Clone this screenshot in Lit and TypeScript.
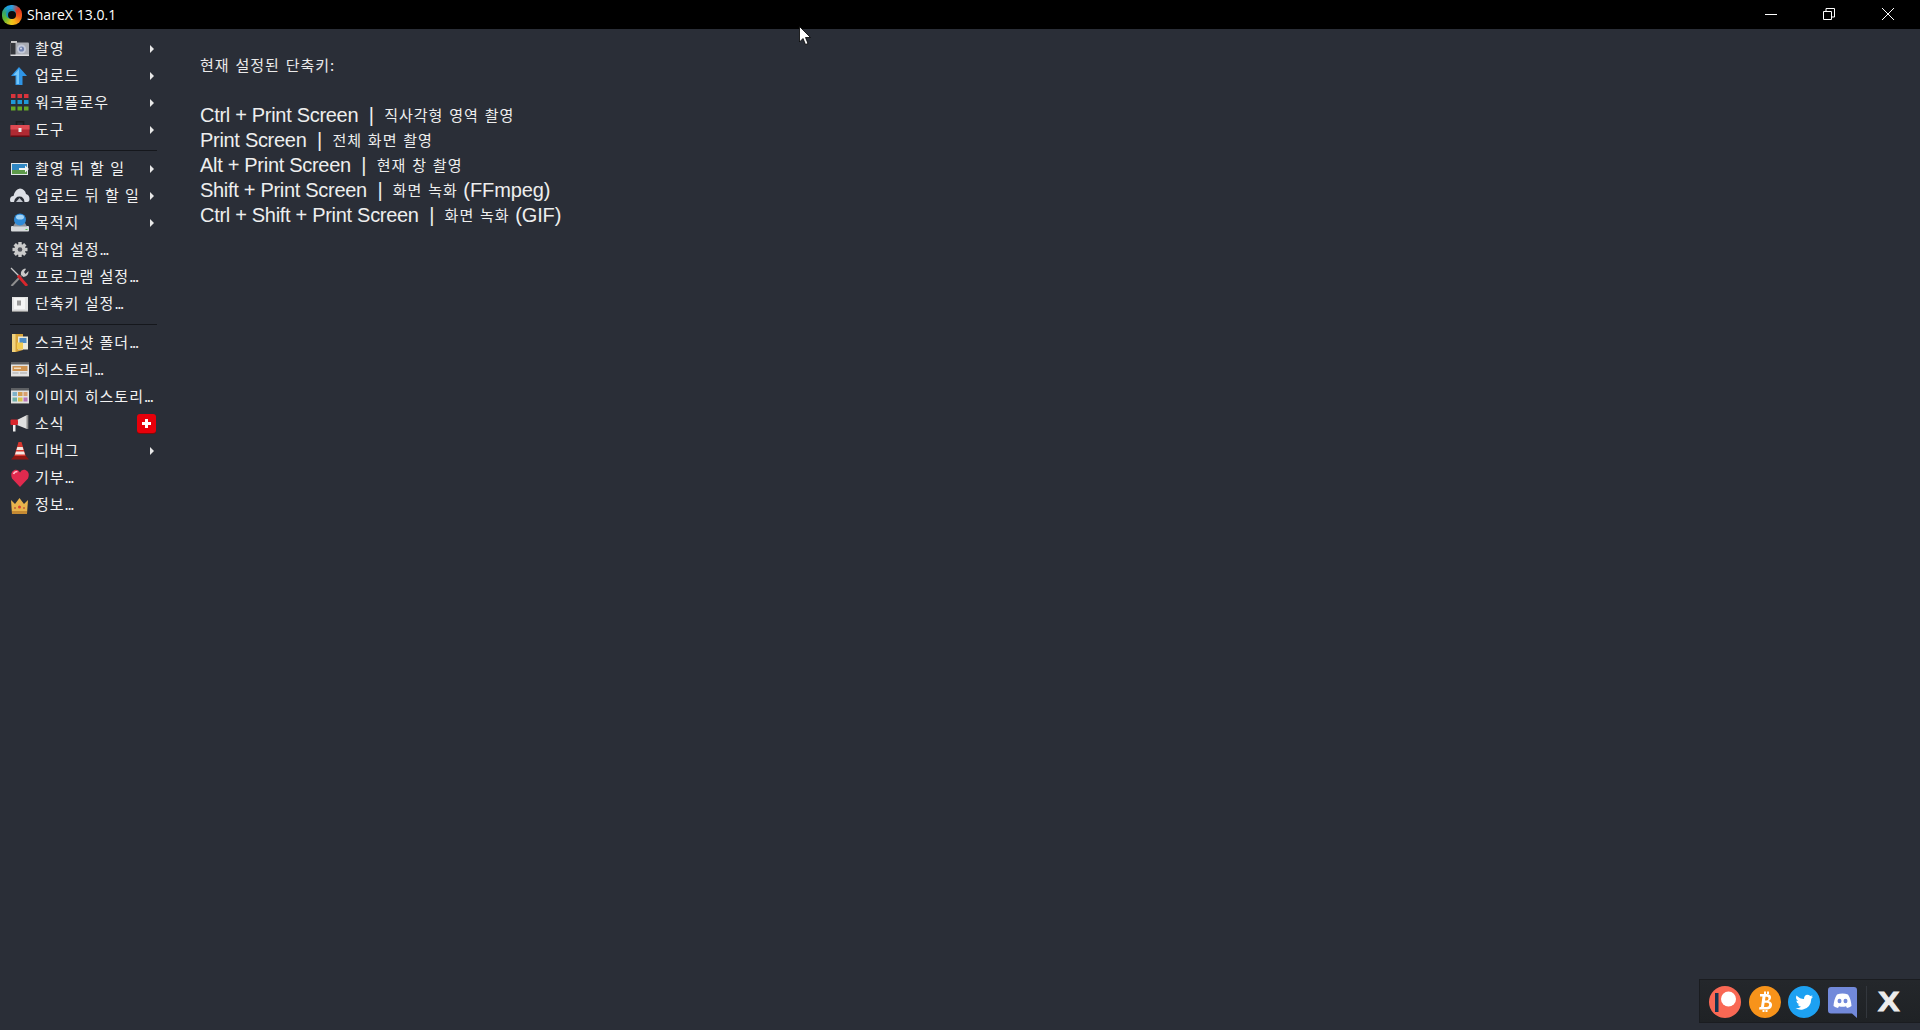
import { LitElement, html, css, svg } from "lit";
import { customElement } from "lit/decorators.js";

const icons: Record<string, unknown> = {
  camera: svg`<rect x="0.500" y="3.500" width="18.500" height="13" rx="1" fill="#a9acb3"/><rect x="0.500" y="3.500" width="5" height="13" fill="#34363b"/><rect x="1" y="2" width="6" height="2" fill="#c5c5c7"/><circle cx="11.500" cy="10" r="4.500" fill="#c3c9d9"/><circle cx="11.500" cy="10" r="2.600" fill="#6f80ad"/><circle cx="11" cy="9.500" r="0.900" fill="#dfe5f2"/><rect x="0.500" y="15.500" width="18.500" height="1.500" fill="#dcdcdf"/>`,
  up: svg`<path d="M9 1 L17 10 H12.500 V19 H5.500 V10 H1 Z" fill="#2f95e6"/><path d="M9 3 L9 18 H6.500 V9 H3.500 Z" fill="#73c6f9"/>`,
  grid: svg`<g fill="#d8343c"><rect x="1" y="1" width="4.500" height="4"/><rect x="7.500" y="1" width="4.500" height="4"/><rect x="14" y="1" width="4.500" height="4"/></g><g fill="#1f9ad8"><rect x="1" y="7" width="4.500" height="4"/><rect x="7.500" y="7" width="4.500" height="4"/><rect x="14" y="7" width="4.500" height="4"/></g><g fill="#66a828"><rect x="1" y="13.500" width="4.500" height="4"/><rect x="7.500" y="13.500" width="4.500" height="4"/><rect x="14" y="13.500" width="4.500" height="4"/></g>`,
  toolbox: svg`<path d="M6.500 5 V1.800 H13.500 V5" fill="none" stroke="#1d1d1f" stroke-width="1.600"/><rect x="0.500" y="5" width="19" height="12" rx="1" fill="#b02a33"/><rect x="0.500" y="5" width="19" height="4.500" fill="#de4a52"/><rect x="0.500" y="15.500" width="19" height="1.500" fill="#5f0d14"/><rect x="8.500" y="8" width="3" height="4" fill="#e8e8e8"/>`,
  afterCapture: svg`<rect x="1" y="4" width="17" height="12" fill="#e1e7ea"/><rect x="2" y="5" width="15" height="10" fill="#2f87c4"/><rect x="2" y="11" width="15" height="4" fill="#5d9a4a"/><path d="M9 9 H15 V6.500 L19 10 L15 13.500 V11 H9 Z" fill="#f2f5f6"/>`,
  cloud: svg`<path d="M4 16 H1 Q0 16 0 14 Q0 10 3.500 10 Q5 3 10 2.500 Q15 3 16 8 Q19.500 9 19.500 13 Q19.500 16 17 16 H14.500 Q14 10.500 9.500 10.500 Q5 10.500 4 16 Z" fill="#dde0e6"/><path d="M6 16 L9.500 12 L13 16 Z" fill="#c2c6ce"/>`,
  dest: svg`<rect x="1" y="13" width="18" height="5.500" rx="1" fill="#d8dadc"/><path d="M3 13.500 L5 10 H15 L17 13.500 Z" fill="#8d939b"/><circle cx="10" cy="6.500" r="6" fill="#2f8ad6"/><ellipse cx="10" cy="4.200" rx="4" ry="2.400" fill="#a0d3f7"/><rect x="15.500" y="16" width="2" height="1" fill="#4ec24e"/>`,
  gear: svg`<g fill="#cbcbcb"><circle cx="10" cy="9.500" r="5.500"/><rect x="8.300" y="2" width="3.400" height="15"/><rect x="2.500" y="7.800" width="15" height="3.400"/><rect x="8.300" y="2" width="3.400" height="15" transform="rotate(45 10 9.500)"/><rect x="8.300" y="2" width="3.400" height="15" transform="rotate(-45 10 9.500)"/></g><circle cx="10" cy="9.500" r="2.300" fill="#50525a"/>`,
  tools: svg`<path d="M1.500 19 L11 9" stroke="#8f8f8f" stroke-width="2"/><path d="M1 1 L9 9" stroke="#c9c9c9" stroke-width="1.200"/><path d="M8 8.500 L17 19" stroke="#d8262c" stroke-width="2.800"/><path d="M11 8 Q10 3 15 1.500 L16 2 L14 5 L15.500 7 L18.500 4 Q19 9 13.500 10 Z" fill="#c9c9c9"/>`,
  hotkey: svg`<rect x="2" y="3" width="16" height="15" fill="#e4e4e4"/><rect x="2" y="16.800" width="16" height="1.200" fill="#8b8b8b"/><rect x="4" y="4" width="11" height="11" fill="#f5f5f5"/><rect x="7" y="6.500" width="4" height="5" fill="#9a9a9a"/>`,
  folder: svg`<path d="M2 1 H13 V17 L6 19 H2 Z" fill="#d9a53a"/><rect x="2" y="1" width="3.500" height="18" fill="#f0d27e"/><rect x="8" y="3.500" width="10" height="13" fill="#ece9da"/><rect x="9.500" y="5" width="7" height="5" fill="#4d8cc6"/><rect x="7" y="9.500" width="6" height="6.500" fill="#f2cb52"/>`,
  history: svg`<rect x="1" y="2" width="18" height="15" rx="1" fill="#e2e2e2"/><rect x="1" y="2" width="18" height="2.500" fill="#5e6063"/><rect x="2.500" y="6" width="15" height="5" fill="#cf9350"/><rect x="4" y="7.500" width="7" height="1.500" fill="#f1dcc0"/><rect x="2.500" y="12.500" width="6" height="1" fill="#a9a9a9"/><rect x="10" y="12.500" width="7" height="1" fill="#a9a9a9"/><rect x="1" y="16" width="18" height="1" fill="#7f7f7f"/>`,
  imgHistory: svg`<rect x="1" y="1" width="18" height="16" rx="1" fill="#e2e2e2"/><rect x="1" y="1" width="18" height="2.500" fill="#5e6063"/><rect x="2.500" y="5" width="4.500" height="4" fill="#7fb1c9"/><rect x="8" y="5" width="4.500" height="4" fill="#d39c50"/><rect x="13.500" y="5" width="4" height="4" fill="#d9a070"/><rect x="2.500" y="10.500" width="4.500" height="4" fill="#6fb0a8"/><rect x="8" y="10.500" width="4.500" height="4" fill="#d8c24c"/><rect x="13.500" y="10.500" width="4" height="4" fill="#b875b8"/><rect x="1" y="16" width="18" height="1" fill="#7f7f7f"/>`,
  news: svg`<path d="M7 6 L17 1 V15 L7 11 Z" fill="#e0e0e0"/><rect x="0.500" y="5.500" width="7.500" height="5.500" rx="1" fill="#d8262c"/><path d="M3 11 H5.500 V17.500 H3 Z" fill="#eeeeee"/><rect x="16.500" y="1" width="1.800" height="14" fill="#8e8e8e"/>`,
  cone: svg`<path d="M8.500 1 H11.500 L16 16 H4 Z" fill="#d7372d"/><path d="M7.300 6 H12.700 L13.500 9 H6.500 Z M6 10.500 H14 L15 13.500 H5 Z" fill="#f3e8e2"/><path d="M1 18.500 L4 15 H16 L19 18.500 Z" fill="#8c1712"/>`,
  heart: svg`<path d="M10 19 L2 10.500 Q-0.500 4 5 1.800 Q8.500 1 10 4.500 Q11.500 1 15 1.800 Q20.500 4 18 10.500 Z" fill="#e02a4e"/><path d="M3.500 6 Q4.500 3.500 7.500 3.500" stroke="#ffb9c7" stroke-width="1.600" fill="none"/>`,
  crown: svg`<path d="M1 5 L5 9 L9.500 3 L14 9 L18 5 L17 19 H2 Z" fill="#e9b44c"/><rect x="2" y="16" width="15" height="3" fill="#c58a33"/><circle cx="9.500" cy="12" r="1.500" fill="#d9402f"/><circle cx="5" cy="13" r="1" fill="#c0603a"/><circle cx="14" cy="13" r="1" fill="#c0603a"/>`,
};

type Item = { icon: string; label: string; more?: boolean; sub?: boolean; badge?: boolean };

const groups: Item[][] = [
  [
    { icon: "camera", label: "촬영", sub: true },
    { icon: "up", label: "업로드", sub: true },
    { icon: "grid", label: "워크플로우", sub: true },
    { icon: "toolbox", label: "도구", sub: true },
  ],
  [
    { icon: "afterCapture", label: "촬영 뒤 할 일", sub: true },
    { icon: "cloud", label: "업로드 뒤 할 일", sub: true },
    { icon: "dest", label: "목적지", sub: true },
    { icon: "gear", label: "작업 설정", more: true },
    { icon: "tools", label: "프로그램 설정", more: true },
    { icon: "hotkey", label: "단축키 설정", more: true },
  ],
  [
    { icon: "folder", label: "스크린샷 폴더", more: true },
    { icon: "history", label: "히스토리", more: true },
    { icon: "imgHistory", label: "이미지 히스토리", more: true },
    { icon: "news", label: "소식", badge: true },
    { icon: "cone", label: "디버그", sub: true },
    { icon: "heart", label: "기부", more: true },
    { icon: "crown", label: "정보", more: true },
  ],
];

const hotkeys = [
  ["Ctrl + Print Screen", "직사각형 영역 촬영", ""],
  ["Print Screen", "전체 화면 촬영", ""],
  ["Alt + Print Screen", "현재 창 촬영", ""],
  ["Shift + Print Screen", "화면 녹화", " (FFmpeg)"],
  ["Ctrl + Shift + Print Screen", "화면 녹화", " (GIF)"],
];

@customElement("app-root")
export class AppRoot extends LitElement {
  static styles = css`
    :host {
      display: flex;
      flex-direction: column;
      position: relative;
      width: 1920px;
      height: 1030px;
      overflow: hidden;
      background: #2a2e37;
      color: #f0f0f0;
      font-family: "Liberation Sans", "Noto Sans CJK KR", sans-serif;
    }
    .titlebar {
      flex: 0 0 29px;
      height: 29px;
      background: #000;
      display: flex;
      align-items: center;
      color: #fff;
    }
    .logo {
      width: 20px;
      height: 20px;
      margin-left: 2px;
      flex: none;
      border-radius: 9px;
      background: conic-gradient(#2b9fe0 0deg, #e0341f 50deg, #ee5a1c 100deg, #f8b415 160deg, #e6c81d 190deg, #62b72e 240deg, #35a66a 290deg, #1c9ce0 330deg, #2b9fe0 360deg);
      display: flex;
      align-items: center;
      justify-content: center;
    }
    .logo-eye {
      width: 8px;
      height: 8px;
      border-radius: 50%;
      background: #0b0b0b;
      box-shadow: -1px -1px 0 1px #1a93b8;
    }
    .title {
      margin-left: 5px;
      font: 14px/16px "Open Sans", "Liberation Sans", sans-serif;
      letter-spacing: 0.050px;
      color: #fff;
    }
    .winbtns { margin-left: auto; margin-right: 3px; display: flex; }
    .winbtn {
      width: 58.500px;
      height: 29px;
      padding-bottom: 1px;
      box-sizing: border-box;
      display: flex;
      align-items: center;
      justify-content: center;
    }
    .winbtn svg { width: 12px; height: 12px; display: block; }
    .body { flex: 1; display: flex; min-height: 0; }
    .menu {
      flex: 0 0 166px;
      width: 166px;
      padding: 7px 0 0 0;
      box-sizing: border-box;
    }
    .row {
      height: 27px;
      display: flex;
      align-items: center;
      padding-left: 10px;
      font: 15px/27px "Noto Sans CJK KR", sans-serif;
      color: #f2f2f2;
      letter-spacing: 1px;
      word-spacing: 1px;
      white-space: nowrap;
      position: relative;
    }
    .row svg.ic { width: 20px; height: 19px; flex: none; margin: 0 5px 2px 0; }
    .label { margin-bottom: 4px; }
    .dots { letter-spacing: -1.300px; }
    .arrow {
      position: absolute;
      left: 150px;
      top: 9px;
      width: 0;
      height: 0;
      border-left: 4px solid #e8e8e8;
      border-top: 4.500px solid transparent;
      border-bottom: 4.500px solid transparent;
    }
    .badge {
      position: absolute;
      left: 137px;
      top: 3px;
      width: 19px;
      height: 19px;
      border-radius: 3px;
      background: #e8000a;
      display: flex;
      align-items: center;
      justify-content: center;
      box-shadow: 0 1px 0 #7a0a0a;
    }
    .badge svg { width: 11px; height: 11px; display: block; }
    .sep {
      height: 1px;
      margin: 6px 9px 5px 10px;
      background: #15171c;
    }
    .content {
      flex: 1;
      padding: 26px 0 0 34px;
    }
    .heading {
      font: 15px/20px "Noto Sans CJK KR", sans-serif;
      letter-spacing: 1px;
      word-spacing: 1.500px;
      color: #eaeaea;
      margin-bottom: 28px;
    }
    .hk {
      font: 20px/25px "Liberation Sans", sans-serif;
      letter-spacing: -0.300px;
      white-space: pre;
      color: #eeeeee;
    }
    .hk .ko {
      font: 15px/20px "Noto Sans CJK KR", sans-serif;
      letter-spacing: 1px;
      word-spacing: 1.500px;
      vertical-align: 1px;
    }
    .hk .tail { letter-spacing: -0.100px; }
    .social {
      position: absolute;
      left: 1699px;
      top: 979px;
      width: 221px;
      height: 44px;
      display: flex;
      align-items: center;
      padding: 2px 0 0 9px;
      box-sizing: border-box;
      background: linear-gradient(#24272b, #1f2225);
      border: 1px solid #1a1c20;
      border-right: none;
    }
    .social svg { width: 32px; height: 32px; flex: none; display: block; margin-right: 7.500px; }
    .social svg.discord { width: 29px; }
    .social .divider { width: 1px; height: 32px; background: #33373d; margin-left: 1.500px; flex: none; }
    .social .x {
      font: 700 28px/32px "Liberation Sans", sans-serif;
      -webkit-text-stroke: 1px #ececec;
      color: #ececec;
      margin-left: 11px;
      display: block;
      transform: scaleX(1.150);
      transform-origin: left center;
    }
    .cursor { position: absolute; left: 799px; top: 26px; width: 12px; height: 20px; }
  `;

  render() {
    return html`
      <div class="titlebar">
        <div class="logo"><div class="logo-eye"></div></div>
        <span class="title">ShareX 13.0.1</span>
        <div class="winbtns">
          <div class="winbtn">
            <svg viewBox="0 0 12 12"><path d="M0 6.500 H12" stroke="#fff" fill="none"/></svg>
          </div>
          <div class="winbtn">
            <svg viewBox="0 0 12 12"><path d="M.5 3.500 H8.500 V11.500 H.5 Z M3 3.500 V.5 H11.500 V9 H8.500" stroke="#fff" fill="none"/></svg>
          </div>
          <div class="winbtn">
            <svg viewBox="0 0 12 12"><path d="M0 0 L12 12 M12 0 L0 12" stroke="#fff" fill="none"/></svg>
          </div>
        </div>
      </div>
      <div class="body">
        <nav class="menu">
          ${groups.map(
            (g, i) => html`
              ${i > 0 ? html`<div class="sep"></div>` : ""}
              ${g.map(
                (it) => html`
                  <div class="row">
                    <svg class="ic" viewBox="0 0 20 19">${icons[it.icon]}</svg>
                    <span class="label">${it.label}${it.more ? html`<span class="dots">...</span>` : ""}</span>
                    ${it.sub ? html`<span class="arrow"></span>` : ""}
                    ${it.badge
                      ? html`<span class="badge"><svg viewBox="0 0 11 11"><path d="M4 1 H7 V4 H10 V7 H7 V10 H4 V7 H1 V4 H4 Z" fill="#fff"/></svg></span>`
                      : ""}
                  </div>
                `
              )}
            `
          )}
        </nav>
        <main class="content">
          <div class="heading">현재 설정된 단축키:</div>
          ${hotkeys.map(
            ([k, d, e]) => html`<div class="hk">${k}  |  <span class="ko">${d}</span><span class="tail">${e}</span></div>`
          )}
        </main>
      </div>
      <div class="social">
        <svg viewBox="0 0 32 32"><circle cx="16" cy="16" r="16" fill="#f96854"/><circle cx="19.500" cy="13" r="7.500" fill="#fff"/><rect x="6" y="7" width="3.500" height="19" fill="#14334f"/></svg>
        <svg viewBox="0 0 32 32"><circle cx="16" cy="16" r="16" fill="#f7931a"/><path d="M11 8 H18 Q22.500 8.500 22 12 Q21.500 14.500 19.500 15 Q23.500 16 23 19.500 Q22.500 23.500 17.500 23.500 H10 L10.500 21 H12 L13.500 10.500 H11 Z M16.500 10.800 L16 14.500 H17.800 Q19.300 14.500 19.500 12.500 Q19.500 10.800 18 10.800 Z M15.600 16.800 L15 21 H17.500 Q20 21 20.200 18.800 Q20.200 16.800 18 16.800 Z M15 5.500 H17 V8 H15 Z M18 5.500 H20 V8 H18 Z M13.500 23 H15.500 V26 H13.500 Z M16.500 23 H18.500 V26 H16.500 Z" fill="#fff" fill-rule="evenodd"/></svg>
        <svg viewBox="0 0 32 32"><circle cx="16" cy="16" r="16" fill="#1da1f2"/><path d="M25 10.500 Q24 11 23 11.200 Q24 10.500 24.500 9.200 Q23.500 9.800 22.300 10 Q21 8.800 19.500 8.800 Q16 9 16 13 Q12 13 8.500 9.500 Q7 12.500 10 15 Q9 15 8.200 14.500 Q8.500 17.500 11.300 18.300 Q10.500 18.500 9.500 18.300 Q10.500 20.500 13 20.800 Q10.500 22.500 7.500 22.300 Q11 24.300 15 23.500 Q23 21.500 23.300 12.700 Q24.300 11.800 25 10.500 Z" fill="#fff"/></svg>
        <svg class="discord" viewBox="0 0 29 32"><path d="M3 1 H26 Q29 1 29 4 V32 L24 27.500 H3 Q0 27.500 0 24.500 V4 Q0 1 3 1 Z" fill="#7289da"/><path d="M9 8.500 Q14.500 6.500 20 8.500 Q23 13 23.500 20 Q21.500 21.700 19 22 L18 20.300 Q14.500 21.300 11 20.300 L10 22 Q7.500 21.700 5.500 20 Q6 13 9 8.500 Z" fill="#fff"/><ellipse cx="11.500" cy="15" rx="2" ry="2.300" fill="#7289da"/><ellipse cx="17.500" cy="15" rx="2" ry="2.300" fill="#7289da"/></svg>
        <div class="divider"></div>
        <span class="x">X</span>
      </div>
      <svg class="cursor" viewBox="0 0 12 20"><path d="M.5 .5 V16 L4 12.500 L6.500 18.500 L9 17.500 L6.500 11.500 H11.500 Z" fill="#fff" stroke="#000" stroke-width=".8"/></svg>
    `;
  }
}
